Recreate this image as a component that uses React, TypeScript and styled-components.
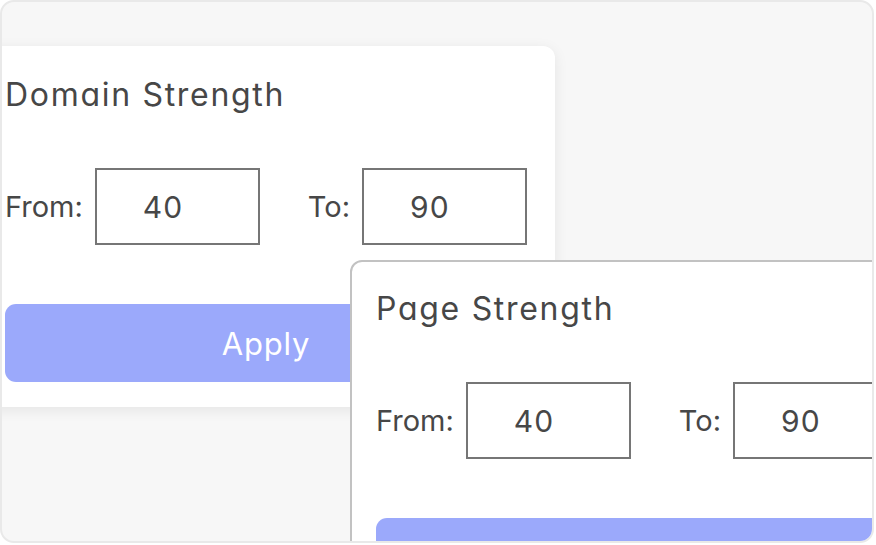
import styled, { createGlobalStyle } from 'styled-components';

const GlobalStyle = createGlobalStyle`
    html, body {
        margin: 0;
        padding: 0;
        background: #ffffff;
    }
    body {
        font-family: Inter, 'Noto Sans', sans-serif;
        font-feature-settings: 'cv11' 1;
    }
`;

const Frame = styled.div`
    position: relative;
    width: 874px;
    height: 543px;
    box-sizing: border-box;
    border: 2px solid #e9e9e9;
    border-radius: 14px;
    background: #f7f7f7;
    overflow: hidden;
`;

// the two cards overlap like windows, so they sit at fixed spots in the frame
const Card = styled.div<{ left: number; top: number; outlined?: boolean }>`
    position: absolute;
    left: ${({ left }) => left}px;
    top: ${({ top }) => top}px;
    width: 576px;
    box-sizing: border-box;
    padding: 24px 26px 23px 24px;
    display: flex;
    flex-direction: column;
    background: #ffffff;
    border-radius: 12px;
    border: ${({ outlined }) => (outlined ? '2px solid #c2c2c2' : '2px solid transparent')};
    box-shadow: ${({ outlined }) => (outlined ? 'none' : '0 3px 14px rgba(0, 0, 0, 0.08)')};
`;

const Title = styled.h2`
    margin: 0;
    font-size: 32px;
    font-weight: 400;
    line-height: 46px;
    color: #474747;
    letter-spacing: 1.7px;
`;

const Range = styled.div`
    display: flex;
    align-items: center;
    margin-top: 50px;
`;

const Label = styled.label<{ spaced?: boolean }>`
    font-size: 29px;
    color: #474747;
    margin-left: ${({ spaced }) => (spaced ? '48px' : '0')};
    margin-right: 12px;
`;

const Field = styled.input`
    width: 165px;
    height: 77px;
    box-sizing: border-box;
    border: 2px solid #767676;
    border-radius: 0;
    padding: 0 0 0 46px;
    font-family: inherit;
    font-feature-settings: 'cv11' 1;
    font-size: 30px;
    letter-spacing: 1px;
    color: #474747;
    background: #ffffff;
    outline: none;
`;

const ApplyButton = styled.button`
    margin-top: 59px;
    height: 78px;
    border: none;
    border-radius: 11px;
    background: #9ba9fb;
    color: #ffffff;
    font-family: inherit;
    font-feature-settings: 'cv11' 1;
    font-size: 31px;
    letter-spacing: 0.8px;
    cursor: pointer;
`;

type FilterCardProps = {
    title: string;
    from: number;
    to: number;
    left: number;
    top: number;
    outlined?: boolean;
};

const FilterCard = ({ title, from, to, left, top, outlined }: FilterCardProps) => (
    <Card left={left} top={top} outlined={outlined}>
        <Title>{title}</Title>
        <Range>
            <Label>From:</Label>
            <Field defaultValue={from} readOnly />
            <Label spaced>To:</Label>
            <Field defaultValue={to} readOnly />
        </Range>
        <ApplyButton>Apply</ApplyButton>
    </Card>
);

const App = () => (
    <>
        <GlobalStyle />
        <Frame>
            <FilterCard title='Domain Strength' from={40} to={90} left={-23} top={44} />
            <FilterCard title='Page Strength' from={40} to={90} left={348} top={258} outlined />
        </Frame>
    </>
);

export default App;
